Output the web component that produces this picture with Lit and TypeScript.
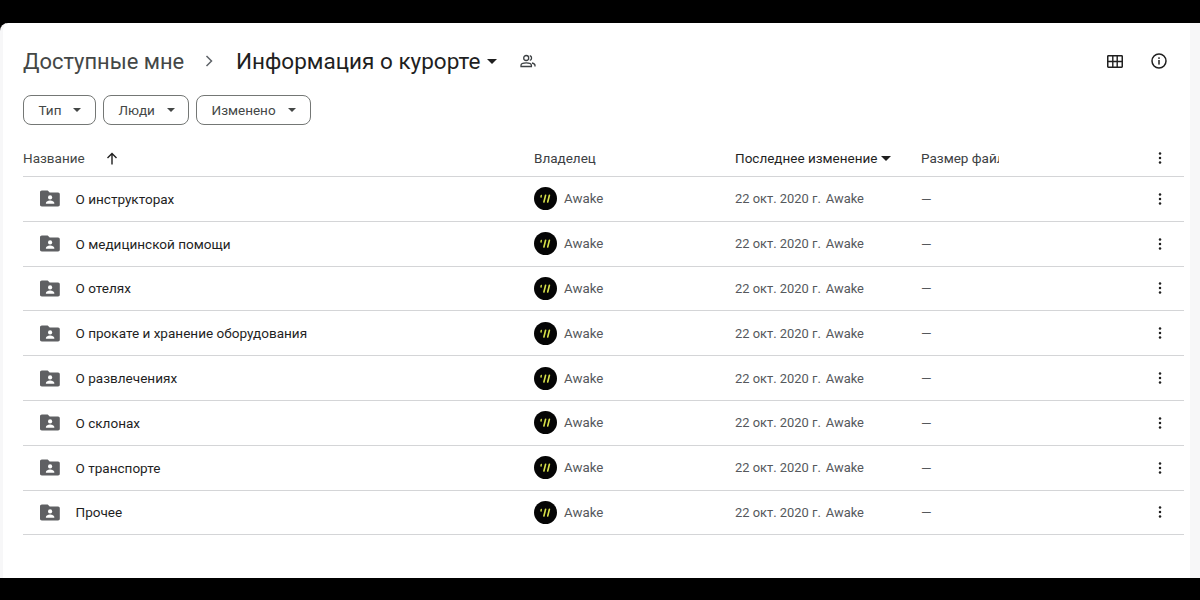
import { LitElement, html, css } from "lit";
import { customElement } from "lit/decorators.js";

const ROWS = [
  "О инструкторах",
  "О медицинской помощи",
  "О отелях",
  "О прокате и хранение оборудования",
  "О развлечениях",
  "О склонах",
  "О транспорте",
  "Прочее",
];

const dots = html`<svg class="dots" width="16" height="16" viewBox="0 0 16 16"><g fill="#1f1f1f"><circle cx="8" cy="3.4" r="1.25"/><circle cx="8" cy="8" r="1.25"/><circle cx="8" cy="12.6" r="1.25"/></g></svg>`;
const caret = (w: number, c: string) => html`<svg width="${w}" height="${w / 2}" viewBox="0 0 10 5"><path d="M0 0h10L5 5z" fill="${c}"/></svg>`;

const folder = html`<svg width="20" height="17" viewBox="0 0 20 17"><path fill-rule="evenodd" fill="#5f6063" d="M1.8 0.5h5.9l2 2.1h8.4c1 0 1.7.8 1.7 1.7v10.5c0 1-.8 1.7-1.7 1.7H1.8C.8 16.5 0 15.7 0 14.8V2.2C0 1.3.8.5 1.8.5z"/><circle cx="10.1" cy="7.4" r="2.1" fill="#fff"/><path fill="#fff" d="M5.9 13.2c0-1.8 2.8-2.6 4.2-2.6s4.2.8 4.2 2.6v.6H5.9z"/></svg>`;

const avatar = html`<svg width="23" height="23" viewBox="0 0 23 23"><circle cx="11.5" cy="11.5" r="11.5" fill="#050505"/><g stroke="#d8e24a" stroke-linecap="round"><path stroke-width="1.4" d="M7.3 8.4l-.3 1.6"/><path stroke-width="1.6" d="M11.6 8.2l-1.7 6.8"/><path stroke-width="1.6" d="M15.4 8.2l-1.7 6.8"/></g></svg>`;

@customElement("app-root")
export class AppRoot extends LitElement {
  static styles = css`
    :host { display: block; width: 1200px; height: 600px; background: #000; font-family: Roboto, "Noto Sans", sans-serif; overflow: hidden; }
    .bar-top { height: 23px; }
    .sheet { height: 555px; box-sizing: border-box; background: #fff; border-left: 3px solid #f7f7f8; border-right: 10px solid #f7f7f8; border-top-left-radius: 8px; padding: 0 6px 0 20px; }
    .crumbs { height: 72px; box-sizing: border-box; padding-top: 4px; display: flex; align-items: center; color: #1f1f1f; }
    .crumb1 { font-size: 21.9px; color: #444746; width: 161px; white-space: nowrap; }
    .chev { margin-left: 20px; width: 32px; display: flex; }
    .crumb2 { font-size: 22.5px; color: #1f1f1f; white-space: nowrap; }
    .title-caret { margin-left: 7px; display: flex; }
    .people { margin-left: 23px; display: flex; }
    .spacer { flex: 1; }
    .tools { display: flex; gap: 28px; align-items: center; margin-right: 17px; }
    .filters { display: flex; gap: 7px; height: 30px; }
    .chip { box-sizing: border-box; height: 30px; display: flex; align-items: center; border: 1px solid #747775; border-radius: 8px; padding-left: 14.5px; font-size: 13.5px; color: #444746; }
    .chip svg { margin-left: 12px; }
    .w1 { width: 73px; }
    .w2 { width: 86px; }
    .w3 { width: 115px; }
    .row, .head { display: grid; grid-template-columns: 511px 201px 186px 227px 24px; align-items: center; border-bottom: 1px solid #d4d5d7; box-sizing: border-box; font-size: 13.5px; }
    .head { height: 37px; margin-top: 15px; color: #444746; }
    .head .c1 { display: flex; align-items: center; gap: 21px; }
    .head .c3 { display: flex; align-items: center; gap: 4px; color: #1f1f1f; }
    .head .c2, .head .c4 { color: #3c4043; }
    .head .c4 { width: 78px; overflow: hidden; white-space: nowrap; }
    .row { height: 44.8px; color: #55585c; }
    .name { display: flex; align-items: center; gap: 15.5px; padding-left: 17px; color: #1f1f1f; font-size: 13.55px; }
    .owner { display: flex; align-items: center; gap: 7px; font-size: 13.3px; }
    .mod { display: flex; gap: 5px; font-size: 12.9px; }
    .dots { display: block; margin-left: 4px; }
  `;

  render() {
    return html`
      <div class="bar-top"></div>
      <div class="sheet">
        <div class="crumbs">
          <span class="crumb1">Доступные мне</span>
          <span class="chev"><svg width="12" height="14" viewBox="0 0 12 14"><path d="M2.5 2l5 5-5 5" fill="none" stroke="#5f6368" stroke-width="1.5"/></svg></span>
          <span class="crumb2">Информация о курорте</span>
          <span class="title-caret">${caret(10, "#1f1f1f")}</span>
          <span class="people"><svg width="16" height="14" viewBox="0 0 16 14" fill="none" stroke="#3c4043" stroke-width="1.3"><circle cx="6.2" cy="4" r="2.5"/><path d="M1 12.5v-1.2c0-1.6 2.6-2.5 5.2-2.5s5.2.9 5.2 2.5v1.2z"/><path d="M9.8 1.6a2.5 2.5 0 0 1 0 4.8M12 9c1.7.4 3 1.2 3 2.4v1.1"/></svg></span>
          <span class="spacer"></span>
          <span class="tools">
            <svg width="16" height="13" viewBox="0 0 16 13"><path fill-rule="evenodd" fill="#1f1f1f" d="M1.4 0h13.2c.8 0 1.4.6 1.4 1.4v10.2c0 .8-.6 1.4-1.4 1.4H1.4C.6 13 0 12.4 0 11.6V1.4C0 .6.6 0 1.4 0zM1.5 1.5v4.2h3.6V1.5zm5 0v4.2h3V1.5zm4.4 0v4.2h3.6V1.5zM1.5 7.2v4.3h3.6V7.2zm5 0v4.3h3V7.2zm4.4 0v4.3h3.6V7.2z"/></svg>
            <svg width="16" height="16" viewBox="0 0 16 16"><circle cx="8" cy="8" r="7" fill="none" stroke="#1f1f1f" stroke-width="1.5"/><rect x="7.25" y="7" width="1.5" height="4.6" fill="#1f1f1f"/><rect x="7.25" y="4.3" width="1.5" height="1.6" fill="#1f1f1f"/></svg>
          </span>
        </div>
        <div class="filters">
          <div class="chip w1">Тип${caret(8, "#444746")}</div>
          <div class="chip w2">Люди${caret(8, "#444746")}</div>
          <div class="chip w3">Изменено${caret(8, "#444746")}</div>
        </div>
        <div class="head">
          <div class="c1">Название<svg width="12" height="13" viewBox="0 0 12 13"><path d="M6 12.5V1.5M1.5 6L6 1.5 10.5 6" fill="none" stroke="#1f1f1f" stroke-width="1.4"/></svg></div>
          <div class="c2">Владелец</div>
          <div class="c3">Последнее изменение${caret(10, "#1f1f1f")}</div>
          <div class="c4">Размер файла</div>
          <div>${dots}</div>
        </div>
        ${ROWS.map((r) => html`
          <div class="row">
            <div class="name">${folder}<span>${r}</span></div>
            <div class="owner">${avatar}<span>Awake</span></div>
            <div class="mod"><span>22 окт. 2020 г.</span><span>Awake</span></div>
            <div>—</div>
            <div>${dots}</div>
          </div>`)}
      </div>
    `;
  }
}
